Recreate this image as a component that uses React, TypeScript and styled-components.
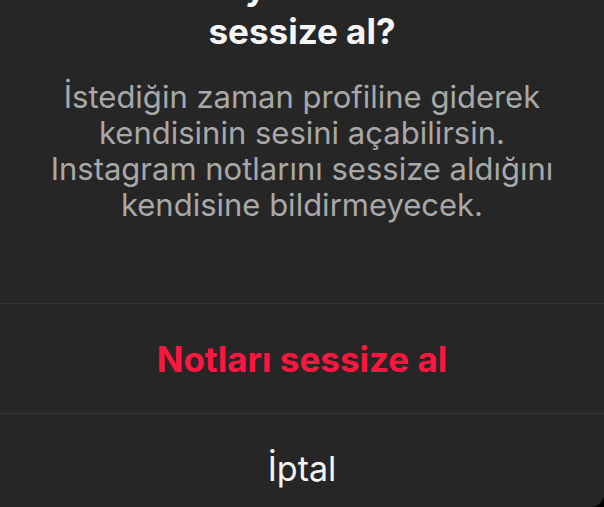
import React from "react";
import styled, { createGlobalStyle } from "styled-components";

const Global = createGlobalStyle`
  html, body { margin: 0; padding: 0; background: #000; }
  body { font-family: Inter, "Noto Sans", "Liberation Sans", sans-serif; -webkit-font-smoothing: antialiased; }
`;

const Sheet = styled.div`
  width: 604px;
  height: 507px;
  background: #262626;
  overflow: hidden;
  display: flex;
  flex-direction: column;
  border-bottom-right-radius: 13px;
`;

const Header = styled.div`
  flex: 0 0 303px;
  display: flex;
  flex-direction: column;
  align-items: center;
`;

const Title = styled.h2`
  margin: -35px 0 0;
  font-size: 35px;
  line-height: 44px;
  font-weight: 700;
  color: #f5f5f5;
  text-align: center;
  white-space: nowrap;
`;

const Body = styled.p`
  margin: 26px 0 0;
  font-size: 31px;
  line-height: 36px;
  font-weight: 400;
  color: #a8a8a8;
  text-align: center;
  white-space: nowrap;
`;

const Action = styled.button<{ $danger?: boolean }>`
  flex: 0 0 110px;
  box-sizing: border-box;
  border: 0;
  border-top: 1px solid #363636;
  background: transparent;
  font-family: inherit;
  font-size: ${(p) => (p.$danger ? "35px" : "34px")};
  font-weight: ${(p) => (p.$danger ? 700 : 400)};
  color: ${(p) => (p.$danger ? "#ff1640" : "#f5f5f5")};
  display: flex;
  align-items: center;
  justify-content: center;
  padding: 0;
`;

export default function App() {
  return (
    <>
      <Global />
      <Sheet>
        <Header>
          <Title>
            Emre Kaya'nın notlarını
            <br />
            sessize al?
          </Title>
          <Body>
            İstediğin zaman profiline giderek
            <br />
            kendisinin sesini açabilirsin.
            <br />
            Instagram notlarını sessize aldığını
            <br />
            kendisine bildirmeyecek.
          </Body>
        </Header>
        <Action $danger>Notları sessize al</Action>
        <Action>İptal</Action>
      </Sheet>
    </>
  );
}
